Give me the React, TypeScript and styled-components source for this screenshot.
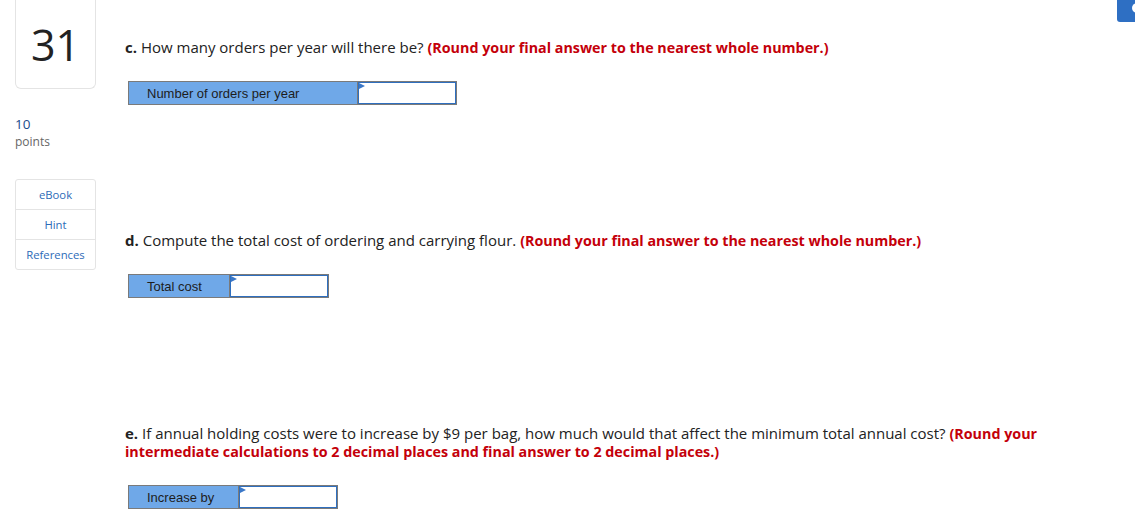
import React from 'react';
import styled, { createGlobalStyle } from 'styled-components';

const GlobalStyle = createGlobalStyle`
  body {
    margin: 0;
    background: #fff;
    font-family: "Open Sans", Lato, sans-serif;
    color: #222;
  }
`;

const Page = styled.div`
  position: relative;
  display: flex;
  gap: 29px;
  width: 1135px;
  height: 525px;
  overflow: hidden;
`;

const Sidebar = styled.div`
  display: flex;
  flex-direction: column;
  width: 81px;
  margin-left: 15px;
`;

const NumberCard = styled.div`
  height: 89px;
  box-sizing: border-box;
  border: 1px solid #e4e4e4;
  border-top: none;
  border-radius: 0 0 6px 6px;
  display: flex;
  align-items: center;
  justify-content: center;
  font-size: 43px;
  color: #222;
`;

const Points = styled.div`
  margin-top: 27px;
  line-height: 17px;
`;

const PointsValue = styled.div`
  font-size: 13.5px;
  color: #1a4c8c;
`;

const PointsLabel = styled.div`
  font-size: 12px;
  color: #666;
`;

const LinkBox = styled.div`
  margin-top: 29px;
  border: 1px solid #e4e4e4;
  border-radius: 3px;
  display: flex;
  flex-direction: column;
`;

const LinkRow = styled.div`
  height: 29px;
  display: flex;
  align-items: center;
  justify-content: center;
  font-size: 11.3px;
  color: #2d6bb8;
  & + & {
    border-top: 1px solid #e4e4e4;
  }
`;

const Main = styled.div`
  display: flex;
  flex-direction: column;
  gap: 126px;
  padding-top: 38px;
`;

const Question = styled.div`
  display: flex;
  flex-direction: column;
  gap: 25px;
`;

const Prompt = styled.div`
  font-size: 15px;
  line-height: 18px;
  width: 930px;
`;

const Letter = styled.b`
  font-weight: 700;
`;

const Note = styled.b`
  font-weight: 700;
  font-size: 14.3px;
  line-height: 14px;
  color: #c4000a;
`;

const AnswerRow = styled.div`
  display: flex;
  margin-left: 3px;
  height: 24px;
`;

const Label = styled.div<{ $w: number }>`
  width: ${p => p.$w}px;
  box-sizing: border-box;
  background: #6fa8e8;
  border: 1px solid #7a7a7a;
  border-right: none;
  padding-left: 18px;
  display: flex;
  align-items: center;
  font-family: "Liberation Sans", Arial, sans-serif;
  font-size: 13px;
  color: #1d1d1d;
`;

const InputCell = styled.div`
  position: relative;
  width: 100px;
  box-sizing: border-box;
  border: 1px solid #7a7a7a;
  background: #fff;
  box-shadow: inset 0 0 0 1px #2f6fbf;
`;

const Marker = styled.span`
  position: absolute;
  left: 1px;
  top: 1px;
  width: 0;
  height: 0;
  border-top: 3px solid transparent;
  border-bottom: 3px solid transparent;
  border-left: 6px solid #3b78c8;
`;

const CornerButton = styled.div`
  position: absolute;
  top: 0;
  right: 0;
  width: 18px;
  height: 22px;
  background: #2e6fc3;
  border-radius: 0 0 0 3px;
  overflow: hidden;
  &::after {
    content: '';
    position: absolute;
    left: 15px;
    top: 3px;
    width: 10px;
    height: 10px;
    border-radius: 50%;
    background: #fff;
  }
`;

const Answer = ({ label, width }: { label: string; width: number }) => (
  <AnswerRow>
    <Label $w={width}>{label}</Label>
    <InputCell>
      <Marker />
    </InputCell>
  </AnswerRow>
);

export default function App() {
  return (
    <Page>
      <GlobalStyle />
      <Sidebar>
        <NumberCard>31</NumberCard>
        <Points>
          <PointsValue>10</PointsValue>
          <PointsLabel>points</PointsLabel>
        </Points>
        <LinkBox>
          <LinkRow>eBook</LinkRow>
          <LinkRow>Hint</LinkRow>
          <LinkRow>References</LinkRow>
        </LinkBox>
      </Sidebar>
      <Main>
        <Question>
          <Prompt>
            <Letter>c.</Letter> How many orders per year will there be?{' '}
            <Note>(Round your final answer to the nearest whole number.)</Note>
          </Prompt>
          <Answer label="Number of orders per year" width={229} />
        </Question>
        <Question>
          <Prompt>
            <Letter>d.</Letter> Compute the total cost of ordering and carrying flour.{' '}
            <Note>(Round your final answer to the nearest whole number.)</Note>
          </Prompt>
          <Answer label="Total cost" width={101} />
        </Question>
        <Question>
          <Prompt>
            <Letter>e.</Letter> If annual holding costs were to increase by $9 per bag, how much would
            that affect the minimum total annual cost?{' '}
            <Note>(Round your intermediate calculations to 2 decimal places and final answer to 2 decimal places.)</Note>
          </Prompt>
          <Answer label="Increase by" width={110} />
        </Question>
      </Main>
      <CornerButton />
    </Page>
  );
}
